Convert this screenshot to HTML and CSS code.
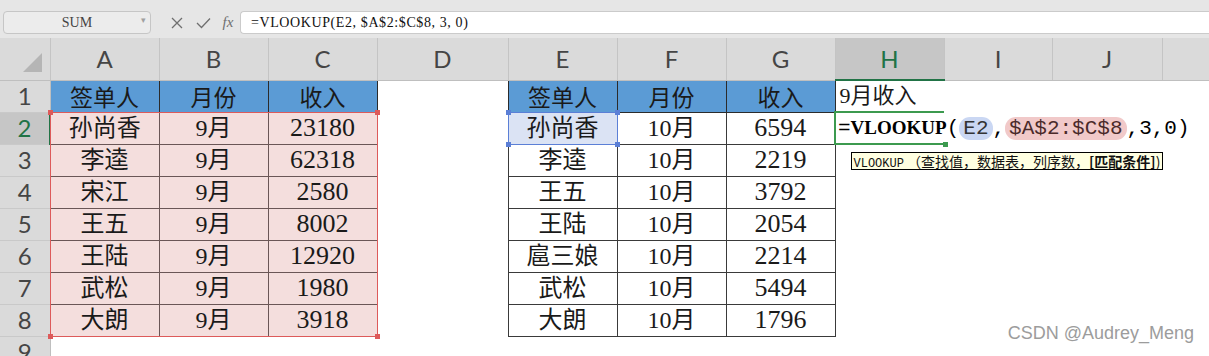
FILE: index.html
```
<!DOCTYPE html>
<html>
<head>
    <meta charset="UTF-8">
    <title>VLOOKUP</title>
    <link rel="stylesheet" href="styles.css">
</head>
<body>
    <div class="toolbar">
        <div class="namebox"><span>SUM</span><span class="dd">&#9662;</span></div>
        <div class="fbtns">
            <span class="btn"><svg width="12" height="12" viewBox="0 0 12 12"><path d="M1 1 L11 11 M11 1 L1 11" stroke="#6f6f6f" stroke-width="1.3" fill="none"/></svg></span>
            <span class="btn"><svg width="15" height="12" viewBox="0 0 15 12"><path d="M1 6 L5.5 10.5 L14 1.5" stroke="#6f6f6f" stroke-width="1.3" fill="none"/></svg></span>
            <span class="btn fx">fx</span>
        </div>
        <div class="fbar">=VLOOKUP(E2, $A$2:$C$8, 3, 0)</div>
    </div>

    <table class="sheet">
        <colgroup>
            <col style="width:50px"><col style="width:109px"><col style="width:109px"><col style="width:109px">
            <col style="width:131px"><col style="width:109px"><col style="width:109px"><col style="width:109px">
            <col style="width:109px"><col style="width:108px"><col style="width:110px"><col style="width:47px">
        </colgroup>
        <tr class="colhead">
            <th class="corner"><span class="tri"></span></th>
            <th>A</th><th>B</th><th>C</th><th>D</th><th>E</th><th>F</th><th>G</th>
            <th class="cur">H</th><th>I</th><th>J</th><th></th>
        </tr>
        <tr>
            <th class="rh">1</th>
            <td class="hd">签单人</td><td class="hd">月份</td><td class="hd">收入</td>
            <td></td>
            <td class="hd">签单人</td><td class="hd">月份</td><td class="hd">收入</td>
            <td class="h1">9月收入</td><td></td><td></td><td></td>
        </tr>
        <tr>
            <th class="rh cur">2</th>
            <td class="pk anchor">孙尚香
                <div class="range"><i class="h tl"></i><i class="h tr"></i><i class="h bl"></i><i class="h br"></i></div>
            </td>
            <td class="pk">9月</td><td class="pk num">23180</td>
            <td></td>
            <td class="wt picked">孙尚香
                <div class="pick"><i class="h tl"></i><i class="h tr"></i><i class="h bl"></i><i class="h br"></i></div>
            </td>
            <td class="wt">10月</td><td class="wt num">6594</td>
            <td class="active"><span class="m">=</span><b>VLOOKUP</b><span class="m">(<span class="ref1">E2</span>,<span class="ref2">$A$2:$C$8</span>,3,0)</span><i class="fill"></i></td>
            <td></td><td></td><td></td>
        </tr>
        <tr>
            <th class="rh">3</th>
            <td class="pk">李逵</td><td class="pk">9月</td><td class="pk num">62318</td>
            <td></td>
            <td class="wt">李逵</td><td class="wt">10月</td><td class="wt num">2219</td>
            <td class="tipcell">
                <div class="tip"><span class="fn">VLOOKUP</span> （查找值，数据表，列序数，<b>[匹配条件]</b>)</div>
            </td>
            <td></td><td></td><td></td>
        </tr>
        <tr>
            <th class="rh">4</th>
            <td class="pk">宋江</td><td class="pk">9月</td><td class="pk num">2580</td>
            <td></td>
            <td class="wt">王五</td><td class="wt">10月</td><td class="wt num">3792</td>
            <td></td><td></td><td></td><td></td>
        </tr>
        <tr>
            <th class="rh">5</th>
            <td class="pk">王五</td><td class="pk">9月</td><td class="pk num">8002</td>
            <td></td>
            <td class="wt">王陆</td><td class="wt">10月</td><td class="wt num">2054</td>
            <td></td><td></td><td></td><td></td>
        </tr>
        <tr>
            <th class="rh">6</th>
            <td class="pk">王陆</td><td class="pk">9月</td><td class="pk num">12920</td>
            <td></td>
            <td class="wt">扈三娘</td><td class="wt">10月</td><td class="wt num">2214</td>
            <td></td><td></td><td></td><td></td>
        </tr>
        <tr>
            <th class="rh">7</th>
            <td class="pk">武松</td><td class="pk">9月</td><td class="pk num">1980</td>
            <td></td>
            <td class="wt">武松</td><td class="wt">10月</td><td class="wt num">5494</td>
            <td></td><td></td><td></td><td></td>
        </tr>
        <tr>
            <th class="rh">8</th>
            <td class="pk">大朗</td><td class="pk">9月</td><td class="pk num">3918</td>
            <td></td>
            <td class="wt">大朗</td><td class="wt">10月</td><td class="wt num">1796</td>
            <td></td><td></td><td></td><td></td>
        </tr>
        <tr>
            <th class="rh">9</th>
            <td></td><td></td><td></td><td></td><td></td><td></td><td></td><td></td><td></td><td></td><td></td>
        </tr>
    </table>

    <div class="wm">CSDN @Audrey_Meng</div>
</body>
</html>
```

FILE: styles.css
```
html, body { margin: 0; overflow: hidden; background: #fff; }
body { font-family: "Liberation Serif", "Noto Sans CJK SC", serif; position: relative; height: 356px; }

.toolbar { height: 38px; box-sizing: border-box; padding-top: 11px; background: #e6e6e6; display: flex; align-items: flex-start; }
.namebox { margin-left: 3px; width: 148px; height: 23px; box-sizing: border-box; border: 1px solid #c6c6c6; border-radius: 4px; background: #ececec; position: relative; display: flex; align-items: center; justify-content: center; font: 14px "Liberation Serif", serif; color: #444; }
.namebox .dd { position: absolute; right: 4px; top: 3px; font-size: 9px; color: #a0a0a0; }
.fbtns { display: flex; margin-left: 13px; height: 23px; align-items: center; }
.btn { display: flex; justify-content: center; align-items: center; width: 26px; }
.btn.fx { width: 24px; font: italic 15px "Liberation Serif", serif; color: #6f6f6f; }
.fbar { flex: 1; height: 23px; box-sizing: border-box; background: #fff; border: 1px solid #cbcbcb; border-right: none; border-radius: 4px 0 0 4px; padding-left: 10px; font: 14px/21px "Liberation Serif", serif; letter-spacing: 0.6px; color: #111; white-space: nowrap; }

.sheet { border-collapse: collapse; table-layout: fixed; width: 1209px; }
.sheet tr { height: 32px; }
.sheet td { padding: 0; text-align: center; font-size: 24px; line-height: 30px; white-space: nowrap; color: #1a1a1a; }
.sheet td.num { font-size: 26px; line-height: 28px; }

.colhead { height: 42px !important; }
.colhead th { background: #dadada; border-right: 1px solid #c4c4c4; border-bottom: 1px solid #bfbfbf; font: 400 24px "Lato", sans-serif; color: #454545; padding: 0; }
.colhead th.cur { background: #c6c6c6; color: #217346; border-bottom: 2px solid #217346; }
.colhead th.corner { vertical-align: top; padding: 15px 0 0 0; text-align: left; }
.tri { display: block; width: 0; height: 0; margin-left: 23px; border-left: 19px solid transparent; border-bottom: 19px solid #b5b5b5; }

.rh { background: #dadada; border-right: 1px solid #bfbfbf; border-bottom: 1px solid #c9c9c9; font: 400 24px/30px "Lato", sans-serif; color: #454545; padding: 0; }
.rh.cur { background: #c6c6c6; color: #217346; border-right: 2px solid #217346; }

.hd { background: #5b9bd5; color: #f4f8fc; border: 1px solid #2b2b2b; font-family: "Noto Sans CJK SC", sans-serif; font-size: 23px !important; }
.pk { background: #f4dedd; border: 1px solid #6a5656; }
.wt { border: 1px solid #3a3a3a; }

.anchor, .picked, .tipcell, .active { position: relative; }
.range { position: absolute; left: -1px; top: -1px; width: 326px; height: 223px; border: 1px solid #dd5a5a; }
.picked { background: #dbe3f4; }
.pick { position: absolute; left: -1px; top: -1px; right: -1px; bottom: -1px; border: 1px solid #5b7fd6; }
.h { position: absolute; width: 5px; height: 5px; }
.range .h { background: #dd5a5a; }
.pick .h { background: #5b7fd6; }
.tl { left: -3px; top: -3px; }
.tr { right: -3px; top: -3px; }
.bl { left: -3px; bottom: -3px; }
.br { right: -3px; bottom: -3px; }

.h1 { text-align: left !important; padding-left: 4px !important; font-size: 22px !important; border-top: 2px solid #217346; }
.active { text-align: left !important; padding-left: 2px !important; font-size: 20px !important; line-height: 26px !important; color: #000 !important; border-top: 2px solid #3c9a4f; border-bottom: 2px solid #3c9a4f; border-left: 2px solid #3c9a4f; }
.active .m { font-family: "Liberation Mono", monospace; font-size: 21px; }
.active b { font-weight: 700; font-size: 19px; }
.ref1 { background: #cad7f3; border-radius: 11px; padding: 0 4px; color: #333; }
.ref2 { background: #f1c9c9; border-radius: 11px; padding: 0 4px; color: #4a2a2a; }
.fill { position: absolute; left: 107px; bottom: -4px; width: 5px; height: 5px; background: #3c9a4f; }

.tip { position: absolute; left: 15px; top: 7px; height: 18px; box-sizing: border-box; border: 1px solid #000; background: #ffffe1; padding: 0 2px; font: 14px/16px "Noto Sans CJK SC", sans-serif; color: #111; white-space: nowrap; text-align: left; }
.tip .fn { font: 12px "Liberation Mono", monospace; }
.tip b { font-weight: 700; }

.wm { position: absolute; right: 15px; bottom: 12px; font: 18px "Liberation Sans", sans-serif; color: #9c9c9c; text-shadow: 0 0 1px #fff; }
```
